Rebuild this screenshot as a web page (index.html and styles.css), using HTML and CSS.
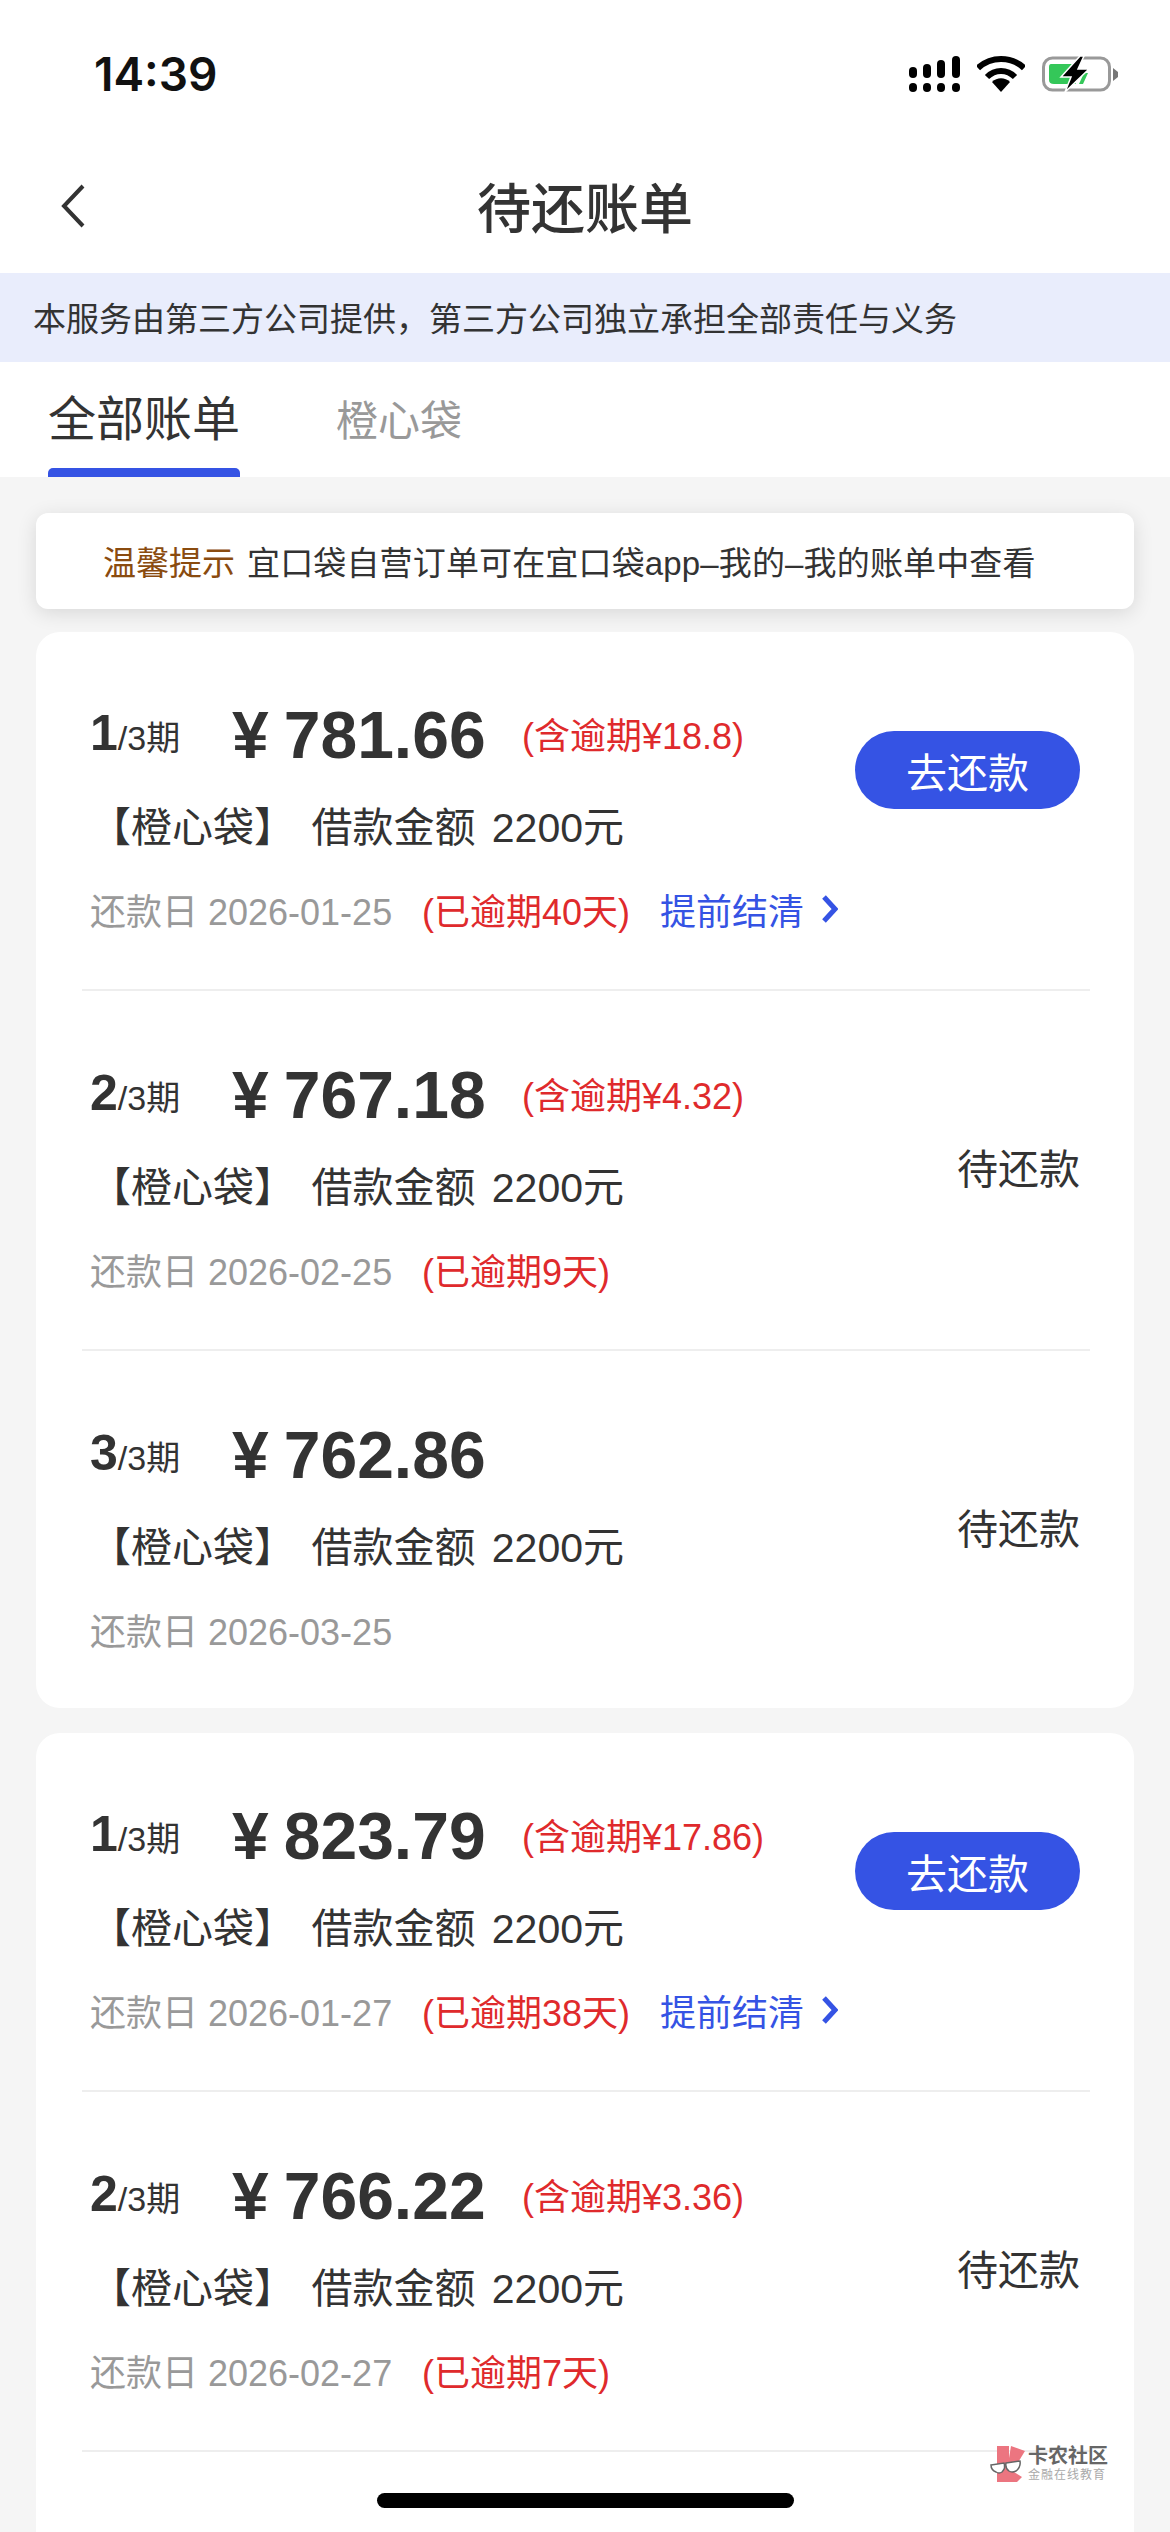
FILE: index.html
```html
<!DOCTYPE html>
<html lang="zh-CN">

<head>
    <meta charset="UTF-8">
    <meta name="viewport" content="width=device-width, initial-scale=1.0">
    <title>待还账单</title>
    <link rel="stylesheet" href="styles.css">
</head>

<body>

    <!-- status bar -->
    <div class="status-bar">
        <span class="time">14:39</span>
        <div class="status-icons">
            <svg class="signal" width="51" height="36" viewBox="0 0 51 36">
                <rect x="0" y="11" width="8" height="11" rx="4" />
                <rect x="14" y="8" width="8" height="14" rx="4" />
                <rect x="28" y="4" width="8" height="18" rx="4" />
                <rect x="43" y="0" width="8" height="22" rx="4" />
                <rect x="0" y="27" width="8" height="9" rx="4" />
                <rect x="14" y="27" width="8" height="9" rx="4" />
                <rect x="28" y="27" width="8" height="9" rx="4" />
                <rect x="43" y="27" width="8" height="9" rx="4" />
            </svg>
            <svg class="wifi" width="48" height="36" viewBox="0 0 48 36">
                <path d="M1 12 C14 0 34 0 47 12" fill="none" stroke="#000" stroke-width="6" />
                <path d="M10 21 C18 13 30 13 38 21" fill="none" stroke="#000" stroke-width="6" />
                <path d="M15 26 C20 21 28 21 33 26 L24 36 Z" />
            </svg>
            <svg class="battery" width="76" height="36" viewBox="0 0 76 36">
                <rect x="1.5" y="2" width="66" height="32" rx="9" fill="none" stroke="#999" stroke-width="3" />
                <path d="M71 12 L76 16 L76 21 L71 25 Z" fill="#777" />
                <path d="M9 8 H37 L30 22 L34 28 H12 Q7 28 7 24 V11 Q7 8 9 8 Z" fill="#34c759" />
                <path d="M42 17 L46 17 L41 28 H37 Z" fill="#34c759" />
                <path d="M38 0 L19 21 H29 L23 36 L47 13 H36 L42 0 Z" stroke="#fff" stroke-width="1.5" />
            </svg>
        </div>
    </div>

    <!-- title -->
    <header class="nav-bar">
        <svg class="back" width="26" height="44" viewBox="0 0 26 44">
            <path d="M23 2 L4 22 L23 42" fill="none" stroke="#333" stroke-width="4" />
        </svg>
        <h1>待还账单</h1>
    </header>

    <div class="notice">本服务由第三方公司提供，第三方公司独立承担全部责任与义务</div>

    <nav class="tabs">
        <span class="tab tab-active">全部账单</span>
        <span class="tab">橙心袋</span>
    </nav>

    <main>
        <div class="tip"><span class="tip-label">温馨提示</span> <span class="tip-text">宜口袋自营订单可在宜口袋app–我的–我的账单中查看</span></div>

        <section class="card">
            <div class="bill first">
                <div class="bill-info">
                    <div class="bill-top"><span class="term"><b>1</b>/3期</span><span class="amount">¥<b>781.66</b></span><span class="late">(含逾期¥18.8)</span></div>
                    <div class="bill-name">【橙心袋】 借款金额 2200元</div>
                    <div class="bill-date"><span class="due">还款日 2026-01-25</span><span class="late">(已逾期40天)</span><span class="settle">提前结清<svg width="18" height="30" viewBox="0 0 18 30"><path d="M4 3 L15 15 L4 27" fill="none" stroke="#3553e4" stroke-width="5" /></svg></span></div>
                </div>
                <button class="pay" type="button">去还款</button>
            </div>
            <div class="bill">
                <div class="bill-info">
                    <div class="bill-top"><span class="term"><b>2</b>/3期</span><span class="amount">¥<b>767.18</b></span><span class="late">(含逾期¥4.32)</span></div>
                    <div class="bill-name">【橙心袋】 借款金额 2200元</div>
                    <div class="bill-date"><span class="due">还款日 2026-02-25</span><span class="late">(已逾期9天)</span></div>
                </div>
                <span class="waiting">待还款</span>
            </div>
            <div class="bill last">
                <div class="bill-info">
                    <div class="bill-top"><span class="term"><b>3</b>/3期</span><span class="amount">¥<b>762.86</b></span></div>
                    <div class="bill-name">【橙心袋】 借款金额 2200元</div>
                    <div class="bill-date"><span class="due">还款日 2026-03-25</span></div>
                </div>
                <span class="waiting">待还款</span>
            </div>
        </section>

        <section class="card">
            <div class="bill first">
                <div class="bill-info">
                    <div class="bill-top"><span class="term"><b>1</b>/3期</span><span class="amount">¥<b>823.79</b></span><span class="late">(含逾期¥17.86)</span></div>
                    <div class="bill-name">【橙心袋】 借款金额 2200元</div>
                    <div class="bill-date"><span class="due">还款日 2026-01-27</span><span class="late">(已逾期38天)</span><span class="settle">提前结清<svg width="18" height="30" viewBox="0 0 18 30"><path d="M4 3 L15 15 L4 27" fill="none" stroke="#3553e4" stroke-width="5" /></svg></span></div>
                </div>
                <button class="pay" type="button">去还款</button>
            </div>
            <div class="bill">
                <div class="bill-info">
                    <div class="bill-top"><span class="term"><b>2</b>/3期</span><span class="amount">¥<b>766.22</b></span><span class="late">(含逾期¥3.36)</span></div>
                    <div class="bill-name">【橙心袋】 借款金额 2200元</div>
                    <div class="bill-date"><span class="due">还款日 2026-02-27</span><span class="late">(已逾期7天)</span></div>
                </div>
                <span class="waiting">待还款</span>
            </div>
            <div class="bill last">
                <div class="bill-info">
                    <div class="bill-top"><span class="term"><b>3</b>/3期</span><span class="amount">¥<b>761.90</b></span></div>
                </div>
            </div>
        </section>
    </main>

    <!-- forum watermark, lies over the page -->
    <div class="watermark">
        <svg width="36" height="36" viewBox="0 0 36 36">
            <path d="M7 0 H19 V36 H7 Z" fill="#ec7580" />
            <path d="M21 0 L35 5 L24 23 H19 V12 Z" fill="#ec7580" />
            <path d="M19 23 L32 31 L27 36 H19 Z" fill="#ec7580" />
            <path d="M1 19 L14 17 Q16 22 12 26 Q9 28 6 26 Q1 24 1 19 Z" fill="#fff" stroke="#666" stroke-width="1.5" />
            <path d="M16 17 L30 15 Q31 21 26 25 Q22 27 19 25 Q15 22 16 17 Z" fill="#fff" stroke="#666" stroke-width="1.5" />
        </svg>
        <div class="watermark-text">
            <span class="watermark-name">卡农社区</span>
            <span class="watermark-sub">金融在线教育</span>
        </div>
    </div>

    <div class="home-bar"></div>

</body>

</html>
```

FILE: styles.css
```css
* {
    box-sizing: border-box;
}

html,
body {
    margin: 0;
    height: 2532px;
    overflow: hidden;
}

body {
    position: relative;
    background-color: #fff;
    color: #333;
    font-family: "Liberation Sans", "Noto Sans CJK SC", sans-serif;
}

/* status bar */
.status-bar {
    height: 150px;
    padding: 0 52px 2px 94px;
    display: flex;
    align-items: center;
    justify-content: space-between;
}

.time {
    font-family: Inter, "Liberation Sans", sans-serif;
    font-size: 46px;
    font-weight: 600;
    color: #111;
}

.status-icons {
    display: flex;
    align-items: center;
    gap: 17px;
}

/* title */
.nav-bar {
    height: 123px;
    padding-left: 60px;
    position: relative;
    display: flex;
    align-items: center;
}

.nav-bar h1 {
    flex: 1;
    margin: 0 0 12px -86px;
    font-size: 54px;
    font-weight: 500;
    text-align: center;
}

.back {
    margin-bottom: 12px;
}

.notice {
    height: 89px;
    padding: 0 0 2px 33px;
    display: flex;
    align-items: center;
    background-color: #e9edfc;
    font-size: 33px;
}

.tabs {
    height: 115px;
    padding-left: 48px;
    display: flex;
    gap: 96px;
}

.tab {
    padding-top: 10px;
    line-height: 100px;
    font-size: 42px;
    color: #999;
}

.tab-active {
    line-height: 96px;
    font-size: 48px;
    color: #333;
}

/* blue line under the active tab */
.tab-active::after {
    content: "";
    display: block;
    height: 9px;
    background-color: #3553e4;
    border-radius: 5px 5px 0 0;
}

main {
    height: 2055px;
    padding: 36px 36px 0;
    background-color: #f5f5f5;
}

.tip {
    height: 96px;
    padding-left: 67px;
    display: flex;
    align-items: center;
    gap: 12px;
    background-color: #fff;
    border-radius: 12px;
    box-shadow: 0 4px 20px rgba(0, 0, 0, 0.12);
    font-size: 33px;
}

.tip-label {
    color: #8a4b0f;
}

.tip-text {
    letter-spacing: 0.15px;
}

.card {
    margin-top: 23px;
    padding: 0 44px 0 46px;
    background-color: #fff;
    border-radius: 24px;
}

.card + .card {
    margin-top: 25px;
}

.bill {
    height: 360px;
    padding: 65px 10px 0 8px;
    display: flex;
    justify-content: space-between;
    border-bottom: 2px solid #eee;
}

.bill.first {
    height: 359px;
    padding-top: 64px;
}

.bill.last {
    height: 357px;
    border-bottom: 0;
}

.bill-top {
    height: 80px;
    display: flex;
    align-items: center;
}

.term {
    width: 142px;
    margin-bottom: 6px;
    font-size: 34px;
}

.term b {
    font-size: 50px;
}

.amount {
    width: 290px;
    margin-bottom: 2px;
    font-size: 66px;
    font-weight: bold;
    white-space: nowrap;
}

.amount b {
    margin-left: 15px;
}

.late {
    font-size: 36px;
    color: #df2a2c;
    white-space: nowrap;
}

.bill-top .late {
    margin-bottom: 6px;
}

.bill-name {
    height: 100px;
    line-height: 104px;
    font-size: 41px;
    word-spacing: 5px;
    white-space: nowrap;
}

.bill-date {
    height: 66px;
    display: flex;
    align-items: center;
    font-size: 36px;
    white-space: nowrap;
}

.due {
    width: 332px;
    color: #999;
}

.settle {
    margin-left: 30px;
    display: flex;
    align-items: center;
    gap: 16px;
    color: #3553e4;
}

.pay {
    width: 225px;
    height: 78px;
    margin-top: 35px;
    border: 0;
    border-radius: 39px;
    background-color: #3553e4;
    color: #fff;
    font-family: inherit;
    font-size: 41px;
}

.waiting {
    margin-top: 80px;
    font-size: 41px;
}

/* overlays */
.watermark {
    position: absolute;
    left: 990px;
    top: 2445px;
    display: flex;
    gap: 2px;
    align-items: center;
}

.watermark-text {
    display: flex;
    flex-direction: column;
}

.watermark-name {
    font-size: 20px;
    line-height: 22px;
    font-weight: bold;
    color: #666;
}

.watermark-sub {
    font-size: 12px;
    line-height: 16px;
    letter-spacing: 1px;
    color: #aaa;
}

.home-bar {
    position: absolute;
    left: 377px;
    top: 2493px;
    width: 417px;
    height: 15px;
    background-color: #000;
    border-radius: 8px;
}
```
